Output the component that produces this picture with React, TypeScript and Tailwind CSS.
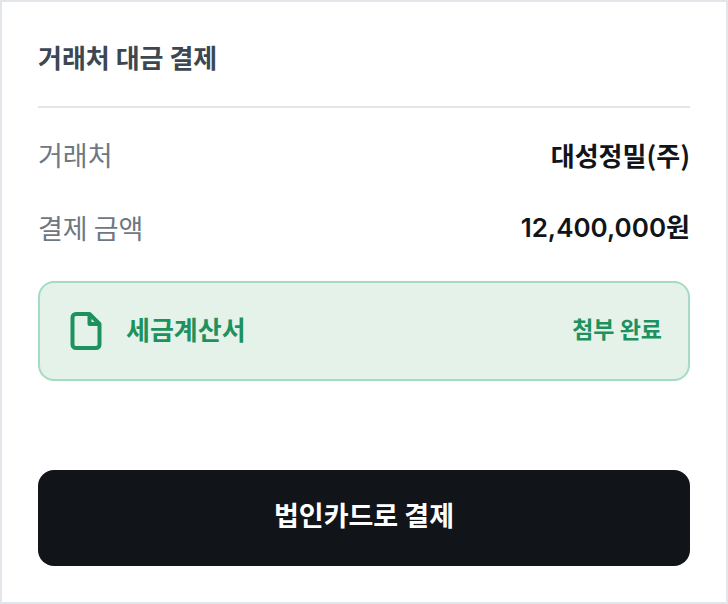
export default function App() {
  return (
    <main className="min-h-screen border-2 border-[#e2e5e9] bg-white px-9 py-9 font-['Noto_Sans_CJK_KR',sans-serif]">
      <h1 className="border-b-2 border-[#e2e5e9] pt-px pb-[31px] text-[26px] leading-9 font-semibold text-[#3d4752]">
        거래처 대금 결제
      </h1>

      <dl className="mt-[29px] space-y-[37px] text-[26px] leading-9">
        <div className="flex items-center justify-between">
          <dt className="text-[27px] text-[#6e7883]">거래처</dt>
          <dd className="font-semibold text-[#111418]">대성정밀(주)</dd>
        </div>
        <div className="flex items-center justify-between">
          <dt className="text-[27px] text-[#6e7883]">결제 금액</dt>
          <dd className="font-['Inter','Noto_Sans_CJK_KR',sans-serif] font-semibold text-[#111418]">12,400,000원</dd>
        </div>
      </dl>

      <div className="mt-[35px] flex h-[100px] items-center rounded-2xl border-2 border-[#a5dac3] bg-[#e4f2ea] px-[26px] text-[#1d915e]">
        <svg width="40" height="40" viewBox="0 0 40 40" fill="none" stroke="currentColor" strokeWidth="4" strokeLinejoin="round" aria-hidden="true">
          <path d="M23.500 3H10a3.500 3.500 0 0 0-3.500 3.500v27A3.500 3.500 0 0 0 10 37h20a3.500 3.500 0 0 0 3.500-3.500V13L23.500 3v10h10" />
        </svg>
        <span className="ml-5 pb-1 text-[26px] leading-9 font-bold">세금계산서</span>
        <span className="ml-auto pb-1.5 text-[23px] leading-8 font-bold">첨부 완료</span>
      </div>

      <button
        type="button"
        className="mt-[89px] h-24 w-full rounded-2xl bg-[#111418] pb-1.5 text-[27px] leading-9 font-semibold text-white"
      >
        법인카드로 결제
      </button>
    </main>
  );
}
